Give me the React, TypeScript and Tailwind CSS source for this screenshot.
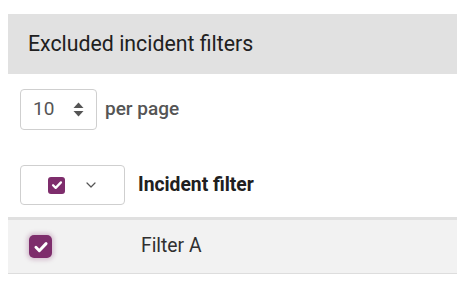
import { ChevronDown } from "lucide-react";

function CheckMark({ size }: { size: number }) {
  return (
    <svg width={size} height={size} viewBox="0 0 16 16" fill="none">
      <path d="M3.5 8.3l3 3 6-6.3" stroke="white" strokeWidth="2.6" strokeLinecap="round" strokeLinejoin="round" />
    </svg>
  );
}

function SortIcon() {
  return (
    <svg width="11" height="15" viewBox="0 0 11 15">
      <path d="M5.5 0.5L10.5 6H0.5Z" fill="#555555" />
      <path d="M5.5 14.5L10.5 9H0.5Z" fill="#555555" />
    </svg>
  );
}

export default function App() {
  return (
    <div className="w-[457px] h-[300px] bg-white pl-2 pt-[14px] overflow-hidden" style={{ fontFamily: "Roboto, 'Liberation Sans', sans-serif" }}>
      <div className="h-[60px] bg-[#e1e1e1] flex items-center pl-5 text-[21.3px] text-[#202020]">
        Excluded incident filters
      </div>

      <div className="flex items-center gap-2 pl-3 mt-[15px]">
        <div className="w-[77px] h-[41px] border border-[#cfcfcf] rounded-[4px] flex items-center justify-between pl-3 pr-3 text-[19px] text-[#555555]">
          <span>10</span>
          <SortIcon />
        </div>
        <span className="text-[19px] font-medium text-[#555555]">per page</span>
      </div>

      <div className="flex items-center pl-3 mt-[35px] pb-3 border-b-[3px] border-[#e0e0e0]">
        <div className="w-[105px] h-[40px] border border-[#cfcfcf] rounded-[4px] flex items-center pl-[27px] gap-[18px]">
          <div className="w-[17px] h-[17px] rounded-[3px] bg-[#7e2d6c] flex items-center justify-center">
            <CheckMark size={14} />
          </div>
          <ChevronDown size={16} strokeWidth={1.8} color="#555555" />
        </div>
        <span className="ml-[13px] text-[19.3px] font-bold text-[#202020]">Incident filter</span>
      </div>

      <div className="h-[54px] bg-[#f2f2f2] border-b border-[#dddddd] flex items-center pl-[21px]">
        <div className="w-[23px] h-[23px] rounded-[5px] bg-[#7e2d6c] flex items-center justify-center shadow-[0_0_4px_2px_rgba(126,45,108,0.25)]">
          <CheckMark size={18} />
        </div>
        <span className="ml-[89px] text-[19.3px] text-[#303030]">Filter A</span>
      </div>
    </div>
  );
}
